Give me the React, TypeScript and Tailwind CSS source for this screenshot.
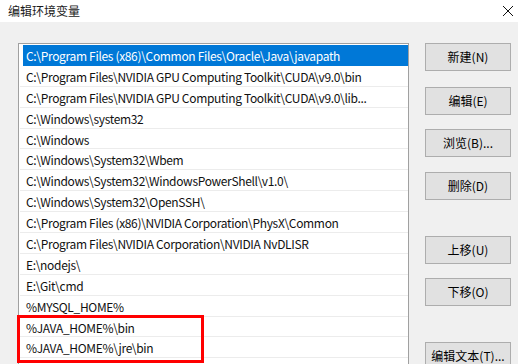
import React from "react";

const paths = [
  "C:\\Program Files (x86)\\Common Files\\Oracle\\Java\\javapath",
  "C:\\Program Files\\NVIDIA GPU Computing Toolkit\\CUDA\\v9.0\\bin",
  "C:\\Program Files\\NVIDIA GPU Computing Toolkit\\CUDA\\v9.0\\lib...",
  "C:\\Windows\\system32",
  "C:\\Windows",
  "C:\\Windows\\System32\\Wbem",
  "C:\\Windows\\System32\\WindowsPowerShell\\v1.0\\",
  "C:\\Windows\\System32\\OpenSSH\\",
  "C:\\Program Files (x86)\\NVIDIA Corporation\\PhysX\\Common",
  "C:\\Program Files\\NVIDIA Corporation\\NVIDIA NvDLISR",
  "E:\\nodejs\\",
  "E:\\Git\\cmd",
  "%MYSQL_HOME%",
  "%JAVA_HOME%\\bin",
  "%JAVA_HOME%\\jre\\bin",
  "",
];

const buttons = [
  { label: "新建(N)", mt: "mt-[21px]" },
  { label: "编辑(E)", mt: "mt-[16px]" },
  { label: "浏览(B)...", mt: "mt-[14px]" },
  { label: "删除(D)", mt: "mt-[15px]" },
  { label: "上移(U)", mt: "mt-[36px]" },
  { label: "下移(O)", mt: "mt-[14px]" },
  { label: "编辑文本(T)...", mt: "mt-[36px]" },
];

const font = { fontFamily: '"Noto Sans CJK SC", "Noto Sans", sans-serif' };

export default function App() {
  return (
    <div className="relative w-[518px] h-[364px] overflow-hidden bg-[#f0f0f0] text-black" style={font}>
      {/* Title bar */}
      <div className="h-[22px] bg-white flex items-center justify-between pl-[8px] pr-[3px]">
        <span className="text-[12px] leading-none text-[#1a1a1a]">编辑环境变量</span>
        <svg width="12" height="12" viewBox="0 0 12 12" className="mr-[1px]">
          <path d="M1 1 L11 11 M11 1 L1 11" stroke="#111" strokeWidth="1" fill="none" />
        </svg>
      </div>

      <div className="flex">
        {/* Path list */}
        <div className="ml-[18px] mt-[21px] w-[391px] h-[330px] bg-white border border-[#a0a0a0] pl-[4px] pt-[1px]">
          {paths.map((p, i) => (
            <div
              key={i}
              className={
                i === 0
                  ? "h-[20.9px] bg-[#0078d7] text-white flex items-center pl-[3px] pt-[1px] text-[12px] tracking-[-0.33px] whitespace-nowrap"
                  : "h-[20.9px] border-b border-[#ececec] -ml-[3px] flex items-center pl-[6px] pt-[2px] text-[12px] tracking-[-0.33px] text-[#111] whitespace-nowrap"
              }
            >
              {p}
            </div>
          ))}
        </div>

        {/* Buttons */}
        <div className="ml-[16px] w-[86px] flex flex-col">
          {buttons.map((b) => (
            <div
              key={b.label}
              className={`${b.mt} h-[28px] bg-[#e1e1e1] border border-[#adadad] flex items-center justify-center text-[12px] whitespace-nowrap`}
            >
              {b.label}
            </div>
          ))}
        </div>
      </div>

      {/* Red highlight annotation */}
      <div className="absolute left-[17px] top-[315px] w-[187px] h-[48px] border-[3px] border-[#ff0000]" />
    </div>
  );
}
